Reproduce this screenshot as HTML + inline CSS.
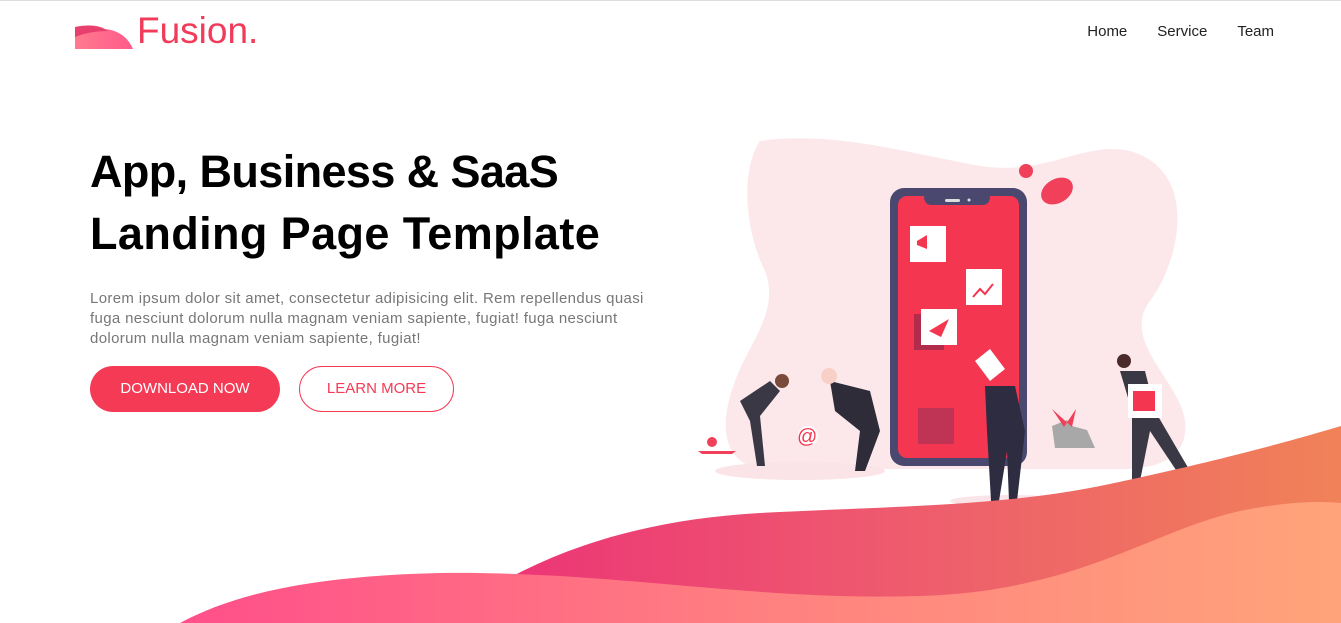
<!DOCTYPE html>
<html><head><meta charset="utf-8"><style>
*{margin:0;padding:0;box-sizing:border-box}
body{width:1341px;height:622px;overflow:hidden;background:#fff;font-family:"Liberation Sans",sans-serif;position:relative;border-top:1px solid #ddd}
.logo{position:absolute;left:137px;top:9px;font-size:37px;color:#f23a5a}
nav{position:absolute;top:22px;right:67px;font-size:15px;color:#222}
nav span{margin-left:30px}
h1{position:absolute;left:90px;top:140px;font-size:45px;line-height:62px;font-weight:bold;color:#000}
h1 .a{letter-spacing:-0.6px}
h1 .b{letter-spacing:0.4px}
p{position:absolute;left:90px;top:288px;width:578px;font-size:15px;line-height:20px;color:#777;letter-spacing:0.35px}
.b1{position:absolute;left:90px;top:365px;width:190px;height:46px;border-radius:23px;background:#f43a55;color:#fff;font-size:15px;text-align:center;line-height:46px}
.b2{position:absolute;left:299px;top:365px;width:155px;height:46px;border-radius:23px;border:1px solid #f43a55;color:#f43a55;font-size:15px;text-align:center;line-height:44px}
svg{position:absolute;left:0;top:0}
</style></head><body>
<svg width="1341" height="622">
<defs>
<linearGradient id="lg" x1="0" x2="1"><stop offset="0" stop-color="#ff7a8e"/><stop offset="1" stop-color="#ff5a8a"/></linearGradient>
<linearGradient id="w1" x1="0" x2="1"><stop offset="0" stop-color="#ec2f78"/><stop offset="0.5" stop-color="#ee5a6e"/><stop offset="1" stop-color="#f08258"/></linearGradient>
<linearGradient id="w2" x1="0" x2="1"><stop offset="0" stop-color="#ff4f8a"/><stop offset="0.5" stop-color="#ff8080"/><stop offset="1" stop-color="#ffa47a"/></linearGradient>
</defs>
<path d="M75 48 L75 26 Q95 22 105 28 Q125 30 133 48 Z" fill="url(#lg)"/>
<path d="M75 26 Q95 22 108 30 Q90 30 75 36Z" fill="#e8406e"/>
<path d="M760 140 C830 130 900 150 980 165 C1050 175 1080 140 1130 150 C1200 170 1180 260 1150 300 C1120 340 1180 380 1185 420 C1188 450 1170 465 1130 468 L760 468 C720 460 720 420 735 380 C750 340 780 310 765 270 C745 230 740 170 760 140Z" fill="#fce8ea"/>
<ellipse cx="800" cy="470" rx="85" ry="9" fill="#fbe4e7"/>
<ellipse cx="1010" cy="500" rx="60" ry="6" fill="#fbe4e7"/>
<rect x="890" y="187" width="137" height="278" rx="14" fill="#4b4870"/>
<rect x="898" y="195" width="121" height="262" rx="9" fill="#f43650"/>
<path d="M924 195 h66 q0 9 -8 9 h-50 q-8 0 -8 -9z" fill="#4b4870"/>
<rect x="945" y="198" width="15" height="3" rx="1.5" fill="#ddd"/><circle cx="969" cy="199" r="1.5" fill="#ddd"/>
<rect x="910" y="225" width="36" height="36" fill="#fff"/>
<rect x="966" y="268" width="36" height="36" fill="#fff"/>
<rect x="914" y="313" width="30" height="36" fill="#b02c4a"/>
<rect x="921" y="308" width="36" height="36" fill="#fff"/>
<rect x="918" y="407" width="36" height="36" fill="#bf3455"/>
<path d="M917 240 l10 -6 v14 l-10 -4z" fill="#f43650"/><path d="M973 296 l7 -8 5 5 8 -10" stroke="#f43650" stroke-width="2" fill="none"/>
<path d="M929 330 l20 -12 -8 18z" fill="#f43650"/>
<path d="M975 360 l15 -12 15 20 -15 12z" fill="#fff"/>
<circle cx="1026" cy="170" r="7" fill="#f0405a"/><ellipse cx="1057" cy="190" rx="17" ry="12" fill="#f0405a" transform="rotate(-30 1057 190)"/>
<circle cx="808" cy="435" r="10" fill="#fff"/><text x="797" y="442" font-size="20" fill="#f43650" font-family="Liberation Sans">@</text>
<path d="M740 400 l30 -20 10 10 -20 25 5 50 -8 0 -7 -45z" fill="#3a3845"/><circle cx="782" cy="380" r="7" fill="#7a4a3a"/>
<path d="M830 380 l40 10 10 40 -15 40 -10 0 5 -40 -25 -20z" fill="#2e2c38"/><circle cx="829" cy="375" r="8" fill="#f8d0c8"/>
<path d="M985 385 l30 0 10 45 -8 70 -8 0 -2 -50 -8 50 -8 0 -4 -70z" fill="#2e2c40"/>
<path d="M1120 370 l25 0 10 40 35 60 -10 5 -30 -45 -10 50 -8 0 0 -70z" fill="#3a3845"/><circle cx="1124" cy="360" r="7" fill="#4a2a2a"/>
<rect x="1128" y="383" width="34" height="34" fill="#fff"/><rect x="1133" y="390" width="22" height="20" fill="#f43650"/>
<path d="M1052 425 l15 -6 5 6 15 4 8 18 -40 0z" fill="#a8a8a8"/><path d="M1052 408 l12 18 12 -18 -4 18" fill="#f0405a"/>
<path d="M698 450 h38 l-4 3 h-30z" fill="#f0405a"/><circle cx="712" cy="441" r="5" fill="#f0405a"/>
<path d="M440 622 C520 560 620 520 760 512 C900 505 1000 505 1100 485 C1220 460 1290 440 1341 425 L1341 622Z" fill="url(#w1)"/>
<path d="M180 622 C240 590 320 575 440 572 C620 570 750 600 920 595 C1080 590 1150 530 1240 510 C1290 500 1320 500 1341 502 L1341 622Z" fill="url(#w2)"/>
</svg>
<div class="logo">Fusion.</div>
<nav><span>Home</span><span>Service</span><span>Team</span></nav>
<h1><span class="a">App, Business &amp; SaaS</span><br><span class="b">Landing Page Template</span></h1>
<p>Lorem ipsum dolor sit amet, consectetur adipisicing elit. Rem repellendus quasi fuga nesciunt dolorum nulla magnam veniam sapiente, fugiat! fuga nesciunt dolorum nulla magnam veniam sapiente, fugiat!</p>
<div class="b1">DOWNLOAD NOW</div>
<div class="b2">LEARN MORE</div>
</body></html>
